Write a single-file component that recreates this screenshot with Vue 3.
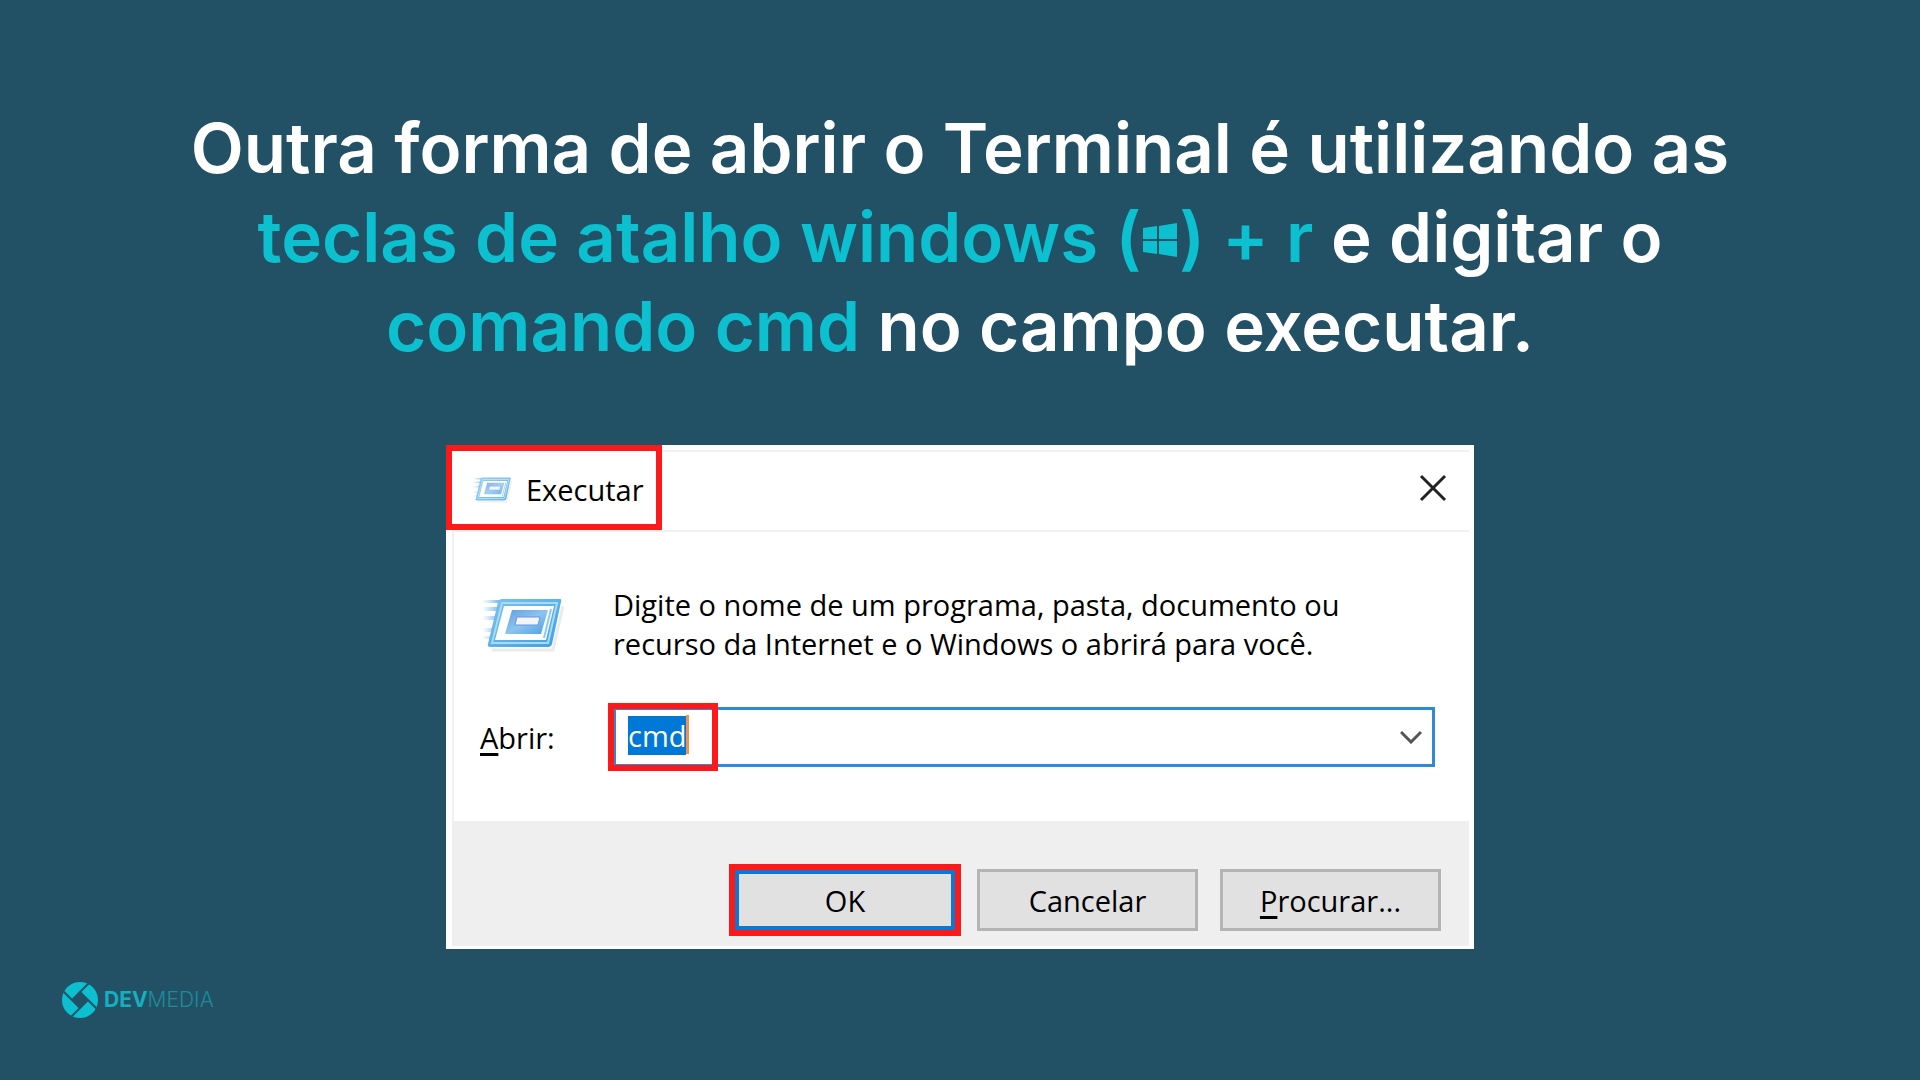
<script setup>
import { onMounted, ref } from 'vue'

const command = ref('cmd')
const commandInput = ref(null)

onMounted(() => {
  commandInput.value.focus()
  commandInput.value.select()
})
</script>

<template>
  <main class="slide">
    <h1 class="headline">
      Outra forma de abrir o Terminal é utilizando as<br />
      <em>teclas de atalho windows (<svg class="win" viewBox="0 0 34 34" aria-label="Windows"><path d="M0 5 14 3V16H0ZM16 3 34 0V16H16ZM0 18H14V31L0 29ZM16 18H34V34L16 31Z" fill="currentColor" /></svg>) + r</em> e digitar o<br />
      <em>comando cmd</em> no campo executar.
    </h1>

    <svg class="defs" aria-hidden="true">
      <defs>
        <linearGradient id="frame" x1="0" y1="0" x2="1" y2="1">
          <stop offset="0" stop-color="#7cc4ec" />
          <stop offset="1" stop-color="#3d9fe6" />
        </linearGradient>
        <linearGradient id="core" x1="0" y1="0" x2="1" y2="1">
          <stop offset="0" stop-color="#5f9ee0" />
          <stop offset="0.5" stop-color="#8cc4ef" />
          <stop offset="1" stop-color="#4a9fe2" />
        </linearGradient>
        <linearGradient id="trail">
          <stop offset="0" stop-color="#8fc6ee" stop-opacity="0" />
          <stop offset="1" stop-color="#6fb4e8" />
        </linearGradient>
        <symbol id="run" viewBox="0 0 84 56">
          <path d="M12 54H73L83 10" fill="none" stroke="#000" stroke-opacity="0.08" stroke-width="3" />
          <path d="M2 4H20V7H2ZM2 11H18V15H2ZM2 20H16V24H2ZM2 32H14V36H2ZM2 40H11V43H2Z" fill="url(#trail)" />
          <path d="M22 3H80Q82 3 81 6L72 48Q71 51 68 51H10Q7 51 8 48L18 6Q19 3 22 3Z" fill="url(#frame)" />
          <path d="M22 7H77L68 47H12Z" fill="none" stroke="#a8daf4" stroke-width="2" />
          <path d="M24 10H74L66 44H15Z" fill="#fff" />
          <path d="M71 13 64 42" stroke="#8cccf0" stroke-width="2" />
          <path d="M32 14H68L61 38H25Z" fill="url(#core)" />
          <path d="M37 21H60L58 29H35Z" fill="#f2f5fd" stroke="#6d94dc" stroke-width="1" />
        </symbol>
      </defs>
    </svg>

    <section class="dialog" aria-label="Executar">
      <header class="titlebar">
        <div class="title">
          <svg class="title-icon" aria-hidden="true"><use href="#run" /></svg>
          <span>Executar</span>
        </div>
        <button class="close" type="button" aria-label="Fechar">
          <svg viewBox="0 0 28 28"><path d="M2 2 26 26M26 2 2 26" fill="none" stroke="#222" stroke-width="3" /></svg>
        </button>
      </header>

      <div class="body">
        <svg class="run-icon" aria-hidden="true"><use href="#run" /></svg>
        <p class="description">
          Digite o nome de um programa, pasta, documento ou<br />
          recurso da Internet e o Windows o abrirá para você.
        </p>
        <label for="command"><span class="key">A</span>brir:</label>
        <div class="combo">
          <input id="command" ref="commandInput" v-model="command" type="text" autocomplete="off" spellcheck="false" />
          <button class="drop" type="button" aria-label="Mostrar opções">
            <svg viewBox="0 0 22 14"><path d="M1 2 11 12 21 2" fill="none" stroke="#555" stroke-width="3" /></svg>
          </button>
        </div>
      </div>

      <footer class="actions">
        <button class="action primary" type="button">OK</button>
        <button class="action" type="button">Cancelar</button>
        <button class="action" type="button"><span class="key">P</span>rocurar...</button>
      </footer>
    </section>

    <div class="brand">
      <svg viewBox="0 0 36 36" aria-hidden="true">
        <circle cx="18" cy="18" r="18" fill="#0cc0cf" />
        <path d="M18 10 26 18 18 26 10 18Z" fill="#225166" />
        <path d="M10 18 28 0M18 10 36 28M26 18 8 36M18 26 0 8" stroke="#225166" stroke-width="2" />
      </svg>
      <span class="wordmark"><b>DEV</b>MEDIA</span>
    </div>
  </main>
</template>

<style>
body {
  background: #225166;
}
</style>

<style scoped>
.slide {
  box-sizing: border-box;
  display: flex;
  flex-direction: column;
  align-items: center;
  min-height: 100vh;
  padding: 104px 62px 62px;
  background: #225166;
}

.headline {
  margin: 0;
  color: #fff;
  font: 600 69px/89px Inter, sans-serif;
  text-align: center;
}

.headline em {
  color: #0cc0cf;
  font-style: normal;
}

.win {
  width: 34px;
  height: 34px;
  margin: 0 2px;
  vertical-align: 5px;
}

.defs {
  position: absolute;
  width: 0;
  height: 0;
}

.dialog {
  box-sizing: border-box;
  width: 100%;
  max-width: 1028px;
  margin-top: 74px;
  padding-bottom: 3px;
  background: #fff;
  color: #000;
  font: 29px/39px "Open Sans", sans-serif;
}

.titlebar {
  display: flex;
  align-items: center;
  justify-content: space-between;
  padding-right: 27px;
  background: linear-gradient(#f1f1f1, #f1f1f1) 0 5px / calc(100% - 5px) 2px no-repeat;
}

.title {
  box-sizing: border-box;
  display: flex;
  align-items: center;
  gap: 14px;
  width: 216px;
  height: 85px;
  padding: 4px 0 0 20px;
  border: 6px solid #fb1919;
  background: #fff;
}

.title-icon {
  width: 40px;
  height: 27px;
  opacity: 0.8;
}

.close,
.drop {
  display: flex;
  padding: 0;
  border: 0;
  background: none;
}

.close svg {
  width: 28px;
  height: 28px;
}

.body {
  display: grid;
  grid-template-columns: 133px 1fr;
  row-gap: 44px;
  align-items: center;
  margin: 0 5px 0 6px;
  padding: 53px 34px 54px 26px;
  border-top: 2px solid #f1f1f1;
  border-left: 2px solid #f1f1f1;
}

.run-icon {
  width: 84px;
  height: 56px;
}

.description {
  margin: 0;
  white-space: nowrap;
}

.key {
  text-decoration: underline;
  text-decoration-thickness: 3px;
  text-underline-offset: 4px;
}

.combo {
  position: relative;
  box-sizing: border-box;
  display: flex;
  align-items: center;
  height: 60px;
  padding-right: 10px;
  border: 3px solid #2f8ad6;
}

.combo::before {
  content: "";
  position: absolute;
  top: -7px;
  left: -8px;
  width: 98px;
  height: 56px;
  border: 6px solid #fb1919;
}

.combo::after {
  content: "";
  position: absolute;
  top: 5px;
  left: 70px;
  width: 3px;
  height: 39px;
  background: #f0944d;
}

.combo input {
  flex: 1;
  min-width: 0;
  height: 39px;
  margin-bottom: 4px;
  padding: 0 0 0 12px;
  border: 0;
  outline: 0;
  background: none;
  color: #000;
  font: inherit;
}

.combo input::selection {
  background: #0078d7;
  color: #fff;
}

.drop svg {
  width: 22px;
  height: 14px;
}

.actions {
  display: flex;
  align-items: center;
  justify-content: flex-end;
  gap: 22px;
  margin: 0 5px 0 6px;
  padding: 48px 28px 15px;
  background: #efefef;
}

.action {
  box-sizing: border-box;
  width: 221px;
  height: 62px;
  padding: 0;
  border: 3px solid #b4b4b4;
  background: #e1e1e1;
  color: #000;
  font: inherit;
}

.primary {
  width: 220px;
  height: 60px;
  border: 4px solid #0b78d4;
  outline: 6px solid #fb1919;
}

.brand {
  display: flex;
  align-items: center;
  align-self: flex-start;
  gap: 6px;
  margin-top: auto;
  color: #1b8c9b;
  font: 300 21px/36px Inter, sans-serif;
}

.brand svg {
  width: 36px;
  height: 36px;
}

.brand b {
  color: #14b0c0;
  font-weight: 700;
}
</style>
